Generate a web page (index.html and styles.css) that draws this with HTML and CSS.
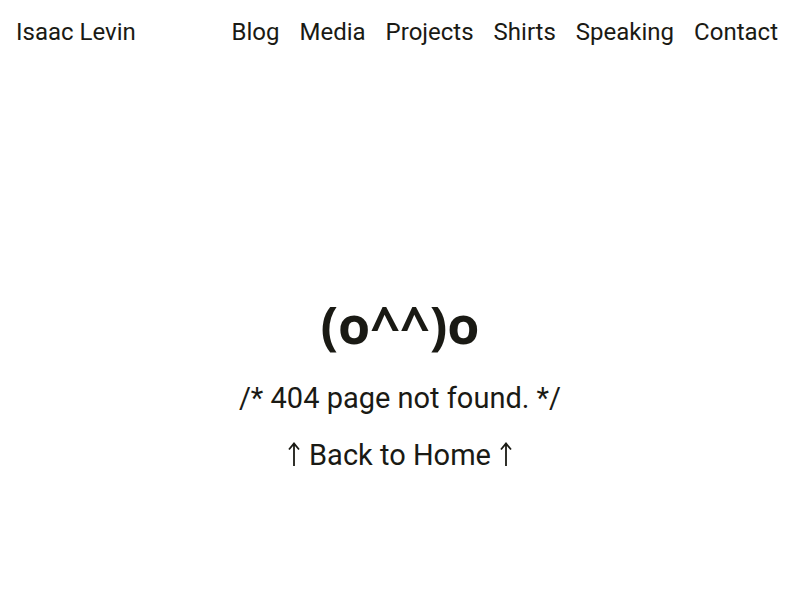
FILE: index.html
```html
<!DOCTYPE html>
<html lang="en">
<head>
<meta charset="utf-8">
<title>404</title>
<link rel="stylesheet" href="styles.css">
</head>
<body>
<header class="site-header">
  <a class="brand" href="#">Isaac Levin</a>
  <nav class="nav">
    <a href="#">Blog</a>
    <a href="#">Media</a>
    <a href="#">Projects</a>
    <a href="#">Shirts</a>
    <a href="#">Speaking</a>
    <a href="#">Contact</a>
  </nav>
</header>
<main class="content">
  <h1 class="face">(o^^)o</h1>
  <p class="msg">/* 404 page not found. */</p>
  <a class="home" href="#"><svg class="arrow" viewBox="0 0 12 24" width="12" height="24" aria-hidden="true"><path d="M6 1.5V24M1 7.5L6 1.5L11 7.5"/></svg> Back to Home <svg class="arrow" viewBox="0 0 12 24" width="12" height="24" aria-hidden="true"><path d="M6 1.5V24M1 7.5L6 1.5L11 7.5"/></svg></a>
</main>
</body>
</html>
```
FILE: styles.css
```css
html, body {
  margin: 0;
  padding: 0;
  background: #fff;
  color: #1a1a14;
  font-family: Roboto, "Liberation Sans", sans-serif;
}
a {
  color: inherit;
  text-decoration: none;
}
.site-header {
  display: flex;
  justify-content: space-between;
  align-items: center;
  padding: 16px 22px 0 16px;
  height: 32px;
  font-size: 24px;
  line-height: 32px;
}
.nav {
  display: flex;
  gap: 20px;
}
.content {
  display: flex;
  flex-direction: column;
  align-items: center;
  padding-top: 241px;
}
.face {
  margin: 0;
  font-family: "Open Sans", sans-serif;
  font-weight: 700;
  font-size: 52px;
  line-height: 70px;
}
.msg {
  margin: 19px 0 0;
  font-size: 29px;
  line-height: 40px;
}
.home {
  margin-top: 17px;
  font-size: 29px;
  line-height: 40px;
}
.arrow {
  display: inline-block;
  vertical-align: -1px;
  margin: 0 2px;
  fill: none;
  stroke: currentColor;
  stroke-width: 1.8;
  stroke-linecap: butt;
  stroke-linejoin: miter;
}
```
